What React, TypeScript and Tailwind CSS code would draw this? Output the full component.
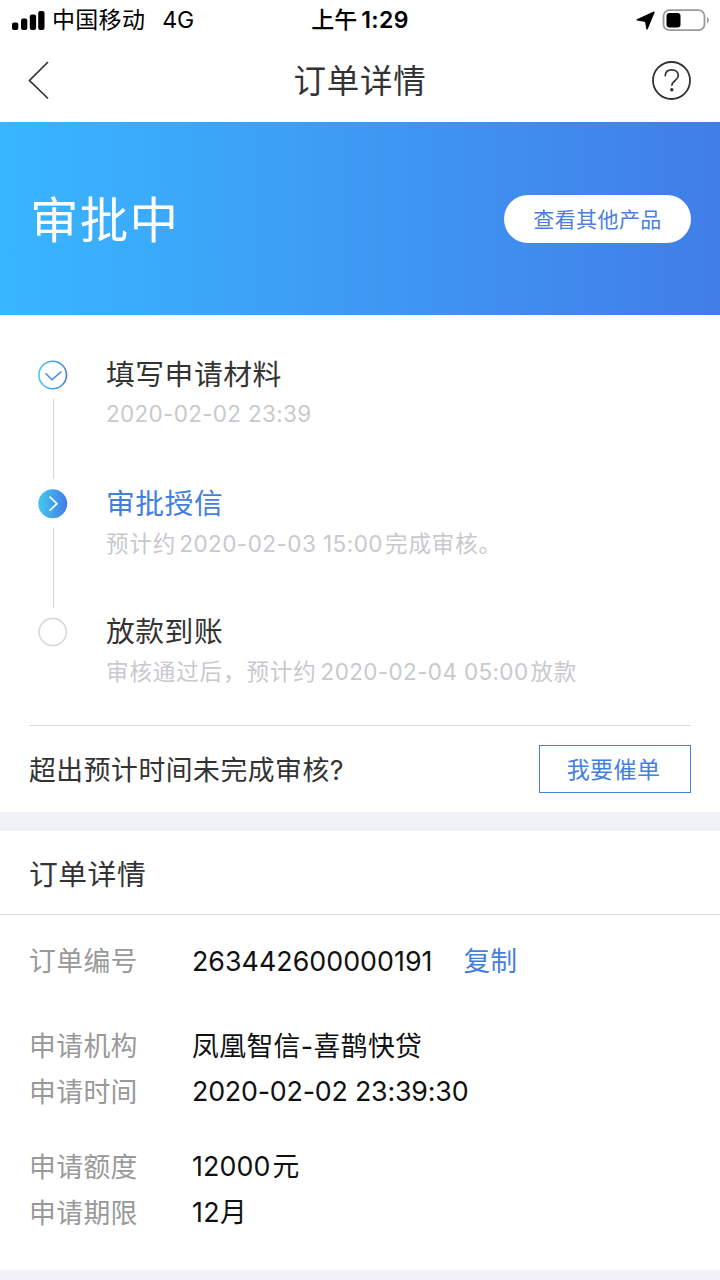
import React from 'react';

type StepStatus = 'done' | 'active' | 'pending';

interface Step {
  title: string;
  note: React.ReactNode;
  status: StepStatus;
}

interface DetailRow {
  label: string;
  value: React.ReactNode;
  rowClass: string;
}

const steps: Step[] = [
  {
    title: '填写申请材料',
    note: <span className="tracking-[0.3px]">2020-02-02 23:39</span>,
    status: 'done',
  },
  {
    title: '审批授信',
    note: <>预计约<span className="ml-[3px] mr-[2px] tracking-[0.45px]">2020-02-03 15:00</span>完成审核。</>,
    status: 'active',
  },
  {
    title: '放款到账',
    note: <>审核通过后，预计约<span className="ml-[4px] mr-[2px] tracking-[0.35px]">2020-02-04 05:00</span>放款</>,
    status: 'pending',
  },
];

const details: DetailRow[] = [
  { label: '申请机构', value: <span className="block pt-px">凤凰智信-喜鹊快贷</span>, rowClass: 'mt-[38px]' },
  {
    label: '申请时间',
    value: <span className="tracking-[-0.2px]">2020-02-02 23:39:30</span>,
    rowClass: '',
  },
  {
    label: '申请额度',
    value: <><span className="mr-[2px] tracking-[0.1px]">12000</span>元</>,
    rowClass: 'mt-[29px]',
  },
  { label: '申请期限', value: '12月', rowClass: '' },
];

const StatusBar = () => (
  <div className="grid h-10 grid-cols-3 items-center text-black">
    <div className="flex items-center pl-3">
      <svg width="33" height="20" viewBox="0 0 33 20" className="shrink-0">
        <rect x="0" y="11.5" width="6.3" height="7.5" rx="2" />
        <rect x="9" y="7.5" width="6.3" height="11.5" rx="2" />
        <rect x="17.8" y="3.5" width="6.3" height="15.5" rx="2" />
        <rect x="26.2" y="0" width="6.3" height="19" rx="2" />
      </svg>
      <span className="ml-[7px] whitespace-nowrap text-[23px] leading-[41px] tracking-[0.3px]">中国移动</span>
      <span className="ml-[17px] text-[23px] leading-[41px]">4G</span>
    </div>
    <div className="whitespace-nowrap text-center text-[23px] font-semibold leading-[41px]">
      <span className="font-medium">上午</span>
      <span className="ml-1 tracking-[0.3px]">1:29</span>
    </div>
    <div className="flex items-center justify-end pr-[11px]">
      <svg width="20" height="20" viewBox="0 0 20 20" className="mr-[6px]">
        <path d="M18 1.2 L11 18 L9.7 10.2 L1.2 8.8 Z" stroke="#000" strokeWidth="1.4" strokeLinejoin="round" />
      </svg>
      <svg width="47" height="24" viewBox="0 0 47 24" fill="none">
        <rect x="1.5" y="1.2" width="41" height="20" rx="6" stroke="#9a9a9a" strokeWidth="1.8" />
        <rect x="4.5" y="4" width="14" height="14.5" rx="3" fill="#000" />
        <path d="M45 8 Q46.8 9 46.8 11.2 Q46.8 13.5 45 14.5 Z" fill="#9a9a9a" />
      </svg>
    </div>
  </div>
);

const NavBar = () => (
  <div className="flex h-[82px] items-center justify-between pl-7 pr-7">
    <svg width="42" height="42" viewBox="0 0 42 42" fill="none">
      <path d="M20 2 L1.500 20.500 L20 38.500" stroke="#333" strokeWidth="1.700" />
    </svg>
    <h1 className="h-[82px] text-[32.500px] leading-[84px] tracking-[0.7px] text-[#333]">订单详情</h1>
    <svg width="42" height="42" viewBox="0 0 42 42" fill="none">
      <circle cx="21.500" cy="20.500" r="18.500" stroke="#333" strokeWidth="1.800" />
      <path
        d="M15.200 16.200 C15.200 12 18 9.800 21.700 9.800 C25.600 9.800 28.300 12.200 28.300 15.600 C28.300 20.500 21.800 20.600 21.800 25.800"
        stroke="#333"
        strokeWidth="1.700"
      />
      <circle cx="21.800" cy="29.800" r="1.700" fill="#333" />
    </svg>
  </div>
);

const StepIcon = ({ status }: { status: StepStatus }) => (
  <svg width="30" height="30" viewBox="0 0 30 30" fill="none" className="block">
    <defs>
      <linearGradient id={`step-${status}`} x1="0" y1="0" x2="1" y2="0">
        <stop offset="0" stopColor="#45c8ee" />
        <stop offset="1" stopColor="#417de8" />
      </linearGradient>
    </defs>
    {status === 'done' && (
      <>
        <circle cx="14.700" cy="15" r="13.800" stroke={`url(#step-${status})`} strokeWidth="1.600" />
        <path d="M7.500 13.200 L14 19.700 L23.500 11.500" stroke="#4a8be6" strokeWidth="1.600" />
      </>
    )}
    {status === 'active' && (
      <>
        <circle cx="14.700" cy="14.700" r="14.500" fill={`url(#step-${status})`} />
        <path d="M11.500 7.700 L19 14.700 L11.500 21.700" stroke="#fff" strokeWidth="1.700" />
      </>
    )}
    {status === 'pending' && <circle cx="14.700" cy="15" r="13.600" stroke="#d9d9dc" strokeWidth="1.600" />}
  </svg>
);

const StepItem = ({ step, last }: { step: Step; last: boolean }) => (
  <div className={last ? 'flex h-[95px]' : 'flex h-[128.500px]'}>
    <div className="flex w-[30px] shrink-0 flex-col items-center">
      <StepIcon status={step.status} />
      {!last && <div className="mt-[9px] h-[80px] w-px bg-[#d4d4d6]" />}
    </div>
    <div className="ml-[38px] whitespace-nowrap">
      <div
        className={`mt-[-5px] h-10 text-[28.800px] leading-10 tracking-[0.5px] ${
          step.status === 'active' ? 'text-[#447fdf]' : 'text-[#333]'
        }`}
      >
        {step.title}
      </div>
      <div
        className={`h-10 text-[22.500px] tracking-[0.9px] text-[#c8c9cd] ${
          step.status === 'done' ? 'leading-[38px]' : 'leading-10'
        }`}
      >
        {step.note}
      </div>
    </div>
  </div>
);

const App: React.FC = () => {
  return (
    <div
      lang="zh-CN"
      className="h-[1280px] w-[720px] overflow-hidden bg-white font-[Inter,'Noto_Sans_CJK_SC',sans-serif] text-[#333]"
    >
      <StatusBar />
      <NavBar />

      <div className="flex h-[193px] items-center justify-between bg-linear-to-r from-[#38b6ff] to-[#417de8] pl-[30px] pr-[29px]">
        <h2 className="pt-1 text-[48.500px] leading-[60px] tracking-[1.200px] text-white">审批中</h2>
        <button className="h-12 w-[187px] rounded-full bg-white pt-0.5 text-[21px] tracking-[0.4px] text-[#4a80dc]">
          查看其他产品
        </button>
      </div>

      <div className="px-[29px]">
        <div className="border-b border-[#dcdcde] pl-[9px] pt-[45px]">
          {steps.map((step, i) => (
            <StepItem key={step.title} step={step} last={i === steps.length - 1} />
          ))}
          <div className="h-[13px]" />
        </div>
        <div className="flex h-[86px] items-center justify-between">
          <p className="pt-[3px] text-[26.800px] tracking-[0.55px]">超出预计时间未完成审核?</p>
          <button className="h-12 w-[152px] border border-[#4a80dc] pr-[3px] pt-0.5 text-[23px] tracking-[0.4px] text-[#447fdf]">
            我要催单
          </button>
        </div>
      </div>

      <div className="h-[19px] bg-[#f1f2f7]" />

      <h3 className="h-[84px] border-b border-[#dedee0] pl-[29px] text-[28.800px] leading-[88px] tracking-[0.5px]">
        订单详情
      </h3>

      <div className="flex h-[355px] flex-col pl-[29px] pt-[23px] text-[26.800px] leading-[46px] tracking-[0.4px]">
        <div className="flex h-[46px]">
          <span className="w-[163px] text-[#999]">订单编号</span>
          <span className="tracking-[0.03px] text-[#111]">263442600000191</span>
          <button className="ml-[31px] tracking-normal text-[#447fdf]">复制</button>
        </div>
        {details.map(row => (
          <div key={row.label} className={`flex h-[46px] shrink-0 ${row.rowClass}`}>
            <span className="w-[163px] pt-px text-[#999]">{row.label}</span>
            <span className="text-[#111]">{row.value}</span>
          </div>
        ))}
      </div>

      <div className="h-[11px] bg-[#f1f2f7]" />
    </div>
  );
};

export default App;
